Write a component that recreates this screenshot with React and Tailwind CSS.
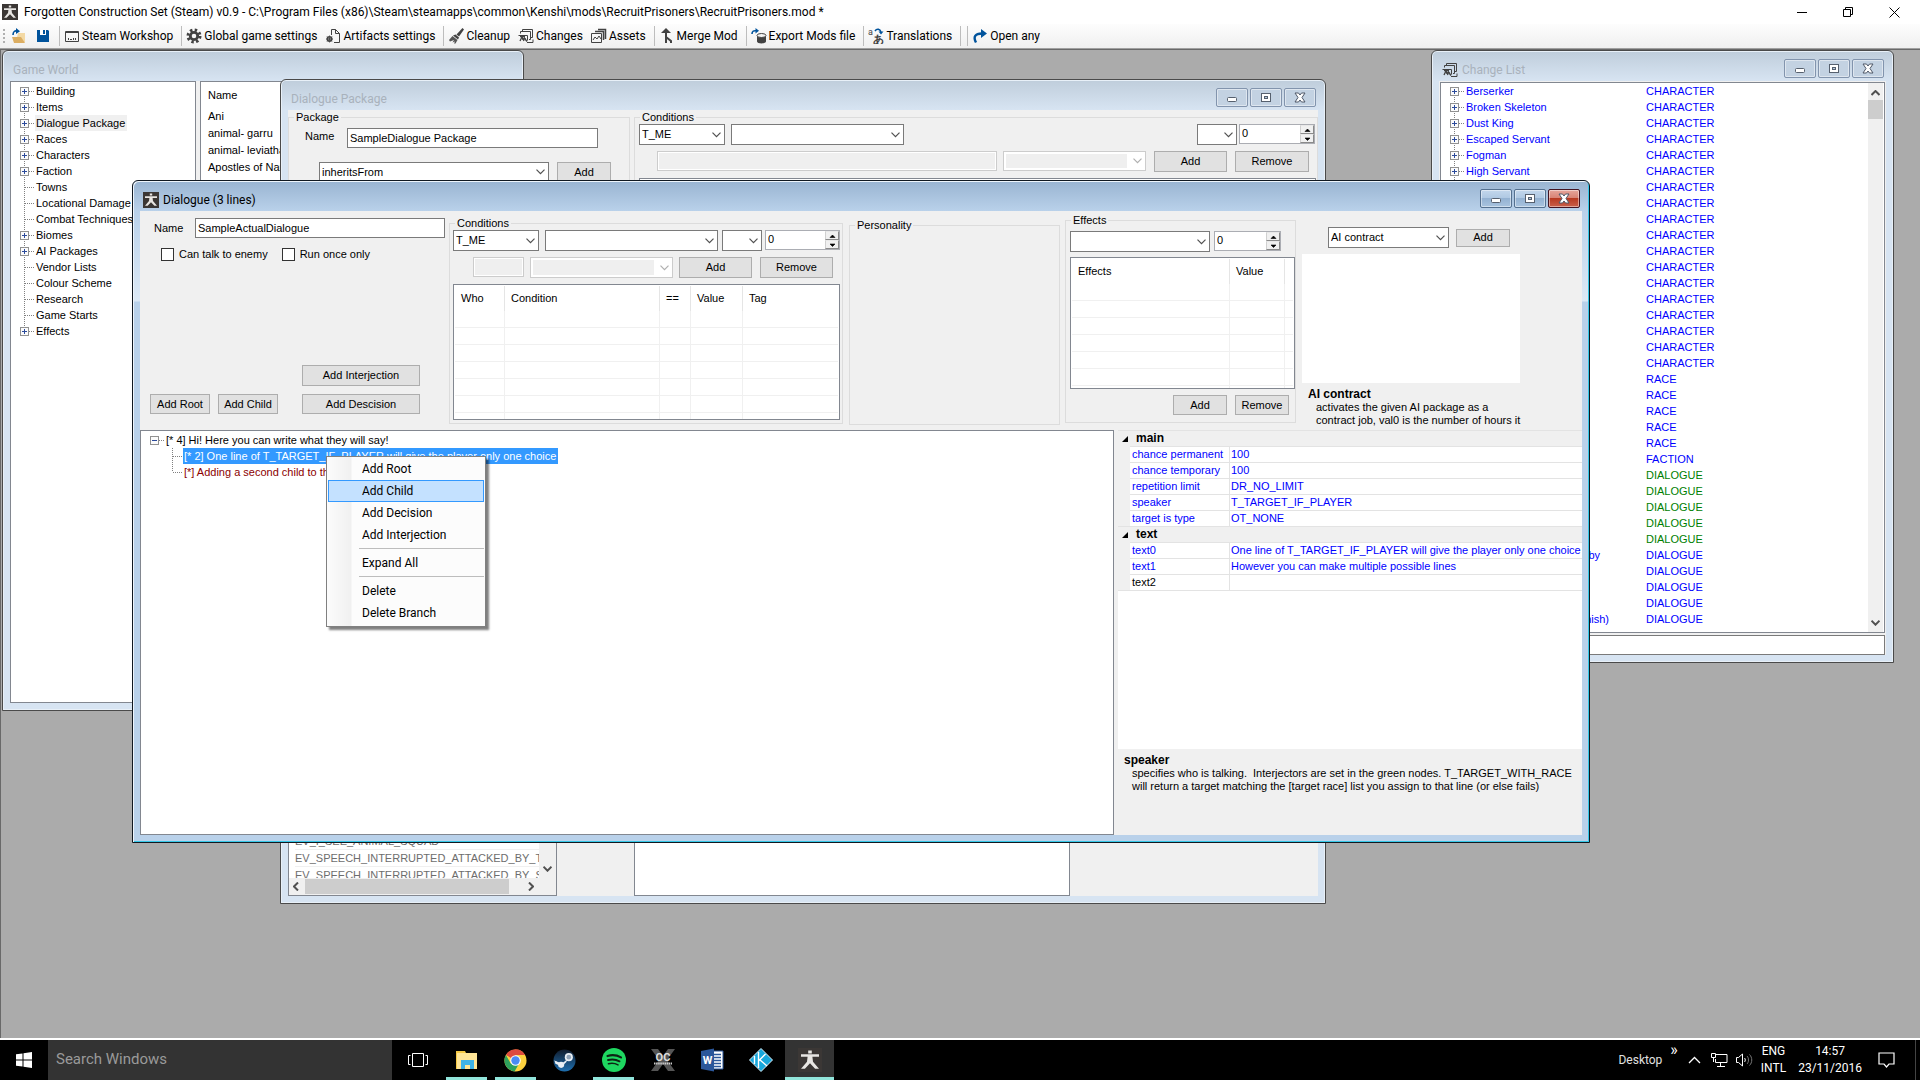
import React, { useState } from 'react';
import clsx from 'clsx';

const GAME_WORLD = [
  ['Building', true],
  ['Items', true],
  ['Dialogue Package', true],
  ['Races', true],
  ['Characters', true],
  ['Faction', true],
  ['Towns', false],
  ['Locational Damage', false],
  ['Combat Techniques', false],
  ['Biomes', true],
  ['AI Packages', true],
  ['Vendor Lists', false],
  ['Colour Scheme', false],
  ['Research', false],
  ['Game Starts', false],
  ['Effects', true],
];

const PACKAGES = ['Ani', 'animal- garru', 'animal- leviathan', 'Apostles of Narko', 'Armour King'];

const CHANGED_NAMES = ['Berserker', 'Broken Skeleton', 'Dust King', 'Escaped Servant', 'Fogman', 'High Servant'];

const CHANGES = [
  ...Array(18).fill('CHARACTER'),
  ...Array(5).fill('RACE'),
  'FACTION',
  ...Array(5).fill('DIALOGUE_NEW'),
  ...Array(5).fill('DIALOGUE'),
].map((type, i) => ({
  name: CHANGED_NAMES[i] || '',
  tail: { 29: 'by', 33: 'nish)' }[i],
  isNew: type === 'DIALOGUE_NEW',
  type: type.replace('_NEW', ''),
}));

const MAIN_PROPS = [
  ['chance permanent', '100'],
  ['chance temporary', '100'],
  ['repetition limit', 'DR_NO_LIMIT'],
  ['speaker', 'T_TARGET_IF_PLAYER'],
  ['target is type', 'OT_NONE'],
];

const TEXT_PROPS = [
  ['text0', 'One line of T_TARGET_IF_PLAYER will give the player only one choice'],
  ['text1', 'However you can make multiple possible lines'],
  ['text2', ''],
];

/* ---------- icons ---------- */

const KenshiIcon = ({ className = 'size-4' }) => (
  <svg viewBox="0 0 16 16" className={className} aria-hidden="true">
    <rect width="16" height="16" fill="#3b3735" />
    <path d="M6.800 1.600h2.400v2H6.800zM2 4.200h12v1.700H9.600l.4 3.200 4 4.700h-2.600L8 10.200l-3.400 3.600H2l4-4.700.4-3.200H2z" fill="#e8e6e3" />
  </svg>
);

const FolderIcon = () => (
  <svg viewBox="0 0 16 16" className="size-4" aria-hidden="true">
    <path d="M7 5h7v9H5z" fill="#f3d9a4" />
    <path d="M1 9h9l4 6H3z" fill="#dcae62" />
    <path d="M2 7C2 3.500 4 2.500 6 3" fill="none" stroke="#00539c" strokeWidth="1.600" />
    <path d="M5 0l4 3.200L5 6z" fill="#00539c" />
  </svg>
);

const SaveIcon = () => (
  <svg viewBox="0 0 16 16" className="size-4" aria-hidden="true">
    <path d="M2 2h11l1 1v11H2z" fill="#00539c" />
    <path d="M5 2h6v5H5z" fill="#fff" />
    <path d="M8 2h2v4H8z" fill="#00539c" />
  </svg>
);

const WorkshopIcon = () => (
  <svg viewBox="0 0 16 16" className="size-4" fill="none" stroke="#424242" aria-hidden="true">
    <path d="M1.500 3.500h13v10h-13z" />
    <path d="M2 3h12v2H2z" fill="#424242" stroke="none" />
    <path d="M4.500 10v2M6 11.500h2M9.500 10v2M11.500 10v2" />
  </svg>
);

const GearIcon = () => (
  <svg viewBox="0 0 16 16" className="size-4" aria-hidden="true">
    <circle cx="8" cy="8" r="6" fill="none" stroke="#424242" strokeWidth="3" strokeDasharray="2.400 2.310" />
    <circle cx="8" cy="8" r="3.700" fill="none" stroke="#424242" strokeWidth="2.800" />
  </svg>
);

const ArtifactIcon = () => (
  <svg viewBox="0 0 16 16" className="size-4" fill="none" stroke="#424242" aria-hidden="true">
    <path d="M6.500 7V1.500h4l4 4v9H9" fill="#f7f7f7" />
    <path d="M10.500 1.500v4h4" />
    <circle cx="4.500" cy="11" r="2.200" strokeWidth="1.600" />
    <path d="M4.500 7.500v7M1 11h7M2 8.500l5 5M7 8.500l-5 5" strokeWidth=".8" />
  </svg>
);

const BroomIcon = () => (
  <svg viewBox="0 0 16 16" className="size-4" aria-hidden="true">
    <path d="M14.500 0l1.500 1.500-5 7-2.500-2z" fill="#424242" />
    <path d="M7.500 6.500l3.500 3-1 2-5-4z" fill="#424242" />
    <path d="M4.500 8l5 4-2 3.500H6l1-2-2.500 1L6 12l-4 1.500L1 12z" fill="#565656" />
  </svg>
);

const ChangesIcon = () => (
  <svg viewBox="0 0 16 16" className="size-4" fill="none" stroke="#424242" aria-hidden="true">
    <path d="M4.500 3V1.500h10v8H13" />
    <path d="M2.500 5.500v-2h10v8H11" />
    <path d="M.5 7.500h9v5M9 14.500h6v-3" />
    <path d="M2 13l2-4 2 4M6 9.500l3 4M2 8.500h5M4 11h4" strokeWidth="1.300" />
  </svg>
);

const AssetsIcon = () => (
  <svg viewBox="0 0 16 16" className="size-4" fill="none" stroke="#424242" aria-hidden="true">
    <path d="M.5 5.500h10v9H.5z" />
    <path d="M2 12l2-3 2 2 2-3 2 3" />
    <path d="M4 3.500h8.500V12M7 1.500h7.500V11" strokeWidth="1.500" />
  </svg>
);

const MergeIcon = () => (
  <svg viewBox="0 0 16 16" className="size-4" fill="none" stroke="#424242" strokeWidth="2" aria-hidden="true">
    <path d="M7 15V3M12 15v-2L7 9" />
    <path d="M7 0l5 5H2z" fill="#424242" stroke="none" />
  </svg>
);

const ExportIcon = () => (
  <svg viewBox="0 0 16 16" className="size-4" aria-hidden="true">
    <path d="M1 6C1 3 3 2.500 5 2.800" fill="none" stroke="#00539c" strokeWidth="1.600" />
    <path d="M4.500 0l3.500 2.800-3.500 2.700z" fill="#00539c" />
    <path d="M6 7.500v6c0 2.500 9 2.500 9 0v-6z" fill="#424242" />
    <ellipse cx="10.500" cy="7.500" rx="4.500" ry="2" fill="#f5f5f5" stroke="#424242" />
  </svg>
);

const TranslateIcon = () => (
  <svg viewBox="0 0 16 16" className="size-4" aria-hidden="true">
    <text x="0" y="7" fontSize="9" fill="#424242">a</text>
    <text x="5" y="15" fontSize="11" fontWeight="bold" fill="#424242">あ</text>
    <path d="M7 3c2-3 5-2 6 1" fill="none" stroke="#00539c" strokeWidth="1.500" />
    <path d="M10.500 3.500h5L13 6.500z" fill="#00539c" />
  </svg>
);

const OpenAnyIcon = () => (
  <svg viewBox="0 0 16 16" className="size-4" aria-hidden="true">
    <path d="M4 14.500C1 9 3 5.500 10 5.500" fill="none" stroke="#00539c" strokeWidth="2.400" />
    <path d="M9 1l6 4.500L9 10z" fill="#00539c" />
  </svg>
);

const Chevron = ({ className }) => (
  <svg viewBox="0 0 9 6" className={clsx('pointer-events-none absolute right-1 top-1/2 h-1.5 w-[9px] -translate-y-1/2', className)} fill="none" stroke="currentColor" strokeWidth="1.200" aria-hidden="true">
    <path d="M.5.7l4 4 4-4" />
  </svg>
);

/* Branch lines and the +/- box of one tree row */
const TreeGlyph = ({ box, first, last }) => (
  <svg width="16" height="16" className="shrink-0" aria-hidden="true" shapeRendering="crispEdges">
    <path d={clsx(!first && 'M5.500 0V8', !last && 'M5.500 8V16', 'M6 8.500H16')} stroke="#808080" strokeDasharray="1 1" fill="none" />
    {box && (
      <>
        <rect x="1.500" y="4.500" width="8" height="8" fill="#fbfbfb" stroke="#919191" />
        <path d={box === '+' ? 'M3 8.500h5M5.500 6v5' : 'M3 8.500h5'} stroke="#2b4a9b" />
      </>
    )}
  </svg>
);

/* ---------- controls ---------- */

const Btn = ({ className, children }) => (
  <button className={clsx('flex items-center justify-center border border-[#adadad] bg-[#e1e1e1] leading-none hover:border-[#0078d7] hover:bg-[#e5f1fb]', className)}>
    {children}
  </button>
);

const Combo = ({ label, value = '', disabled, className }) => (
  <div className={clsx('relative shrink-0', className)}>
    <select
      aria-label={label}
      disabled={disabled}
      className={clsx(
        'block h-full w-full appearance-none border pl-0.5 leading-none outline-none',
        disabled ? 'border-[#ccc] bg-[#efefef] opacity-100 shadow-[inset_0_0_0_2px_white,inset_-18px_0_0_white]' : 'border-[#7a7a7a] bg-white'
      )}
    >
      <option>{value}</option>
    </select>
    <Chevron className={disabled ? 'text-[#b0b0b0]' : 'text-[#505050]'} />
  </div>
);

const Spinner = ({ label, className }) => (
  <div className={clsx('flex shrink-0 border border-[#abadb3] bg-white', className)}>
    <input aria-label={label} defaultValue="0" className="min-w-0 flex-1 pb-0.5 pl-0.5 outline-none" />
    <div className="flex w-3.5 flex-col">
      {['M1 3.500h5L3.500 1z', 'M1 1h5L3.500 3.500z'].map((d, i) => (
        <button key={d} aria-label={i ? 'Down' : 'Up'} className="flex flex-1 items-center justify-center border border-b-[#8a8a8a] border-l-[#d0d0d0] border-r-[#8a8a8a] border-t-[#e8e8e8] bg-[#f0f0f0]">
          <svg viewBox="0 0 7 4" className="h-1 w-[7px] shrink-0"><path d={d} stroke="#000" strokeWidth=".6" /></svg>
        </button>
      ))}
    </div>
  </div>
);

const Group = ({ title, className, children }) => (
  <fieldset className={clsx('shrink-0 border border-[#dcdcdc]', className)}>
    <legend className="ml-[5px] px-0.5 leading-[14px]">{title}</legend>
    {children}
  </fieldset>
);

const ListView = ({ columns, rows, label, className }) => (
  <div className={clsx('shrink-0 overflow-hidden border border-[#828790] bg-white p-px', className)}>
    <table aria-label={label} className="w-full table-fixed border-separate border-spacing-0">
      <thead>
        <tr>
          {columns.map(([name, width], i) => (
            <th key={i} className={clsx('h-[25px] pl-1.5 text-left font-normal', width, i < columns.length - 1 && 'border-r border-[#e5e5e5]')}>{name}</th>
          ))}
        </tr>
      </thead>
      <tbody>
        {Array.from({ length: rows }, (_, r) => (
          <tr key={r}>
            {columns.map((c, i) => (
              <td key={i} className={clsx('h-[17px] border-b border-[#f0f0f0]', i < columns.length - 1 && 'border-r')} />
            ))}
          </tr>
        ))}
      </tbody>
    </table>
  </div>
);

const WindowButtons = ({ active }) => {
  const base = 'flex h-[19px] w-8 items-center justify-center rounded-[2px] border shadow-[inset_0_0_0_1px_rgba(255,255,255,0.45)]';
  const plain = active
    ? 'border-[#54708f] bg-[linear-gradient(#c3d7ec_0%,#b0c9e3_45%,#94b2d2_50%,#a9c4df_100%)]'
    : 'border-[#8294ad] bg-[#c3d2e2]';
  return (
    <div className="mr-0.5 flex gap-0.5">
      <button aria-label="Minimize" className={clsx(base, plain)}>
        <svg width="12" height="11"><rect x="1.500" y="5.500" width="9" height="4" rx="1" fill="#fff" stroke="#56606e" /></svg>
      </button>
      <button aria-label="Maximize" className={clsx(base, plain)}>
        <svg width="12" height="11"><rect x="1.500" y="1.500" width="9" height="8" fill="#fff" stroke="#56606e" /><rect x="4.500" y="4.500" width="3" height="2" fill="#b5c9de" stroke="#56606e" /></svg>
      </button>
      <button aria-label="Close" className={clsx(base, active ? 'border-[#431422] bg-[linear-gradient(#e6a69b_0%,#d98476_45%,#b83a22_50%,#c9604a_100%)]' : plain)}>
        <svg width="12" height="11"><path d="M1 1h3.500L6 3l1.500-2H11L8 5.500 11 10H7.500L6 8l-1.500 2H1l3-4.500z" fill="#fff" stroke="#4f5868" /></svg>
      </button>
    </div>
  );
};

const MdiWindow = ({ title, icon, active, buttons = true, className, children }) => (
  <section
    aria-label={title}
    className={clsx(
      'absolute flex flex-col rounded-t-md border px-[7px] pb-[7px]',
      active
        ? 'border-[#101820] bg-[linear-gradient(180deg,#99b4d1_0px,#b9d1ea_30px,#dce9f6_120px,#b9d1ea_121px)] shadow-[inset_1px_1px_0_#eef5fc,inset_-1px_-1px_0_#35c8e8]'
        : 'border-[#4a4a4a] bg-[linear-gradient(180deg,#bfcddb_0px,#d7e4f2_30px)] shadow-[inset_0_0_0_1px_#e8f0f8]',
      className
    )}
  >
    <header className="flex h-[30px] shrink-0 items-start justify-between pt-2">
      <h2 className={clsx('flex items-center gap-1 pl-[3px] pt-px font-[Roboto,sans-serif] text-xs leading-5', active ? 'text-black' : 'text-[#a9b2bc]')}>
        {icon}
        {title}
      </h2>
      {buttons && <WindowButtons active={active} />}
    </header>
    <div className="flex min-h-0 flex-1 bg-[#f0f0f0]">{children}</div>
  </section>
);

/* ---------- windows ---------- */

const GameWorld = () => (
  <MdiWindow title="Game World" buttons={false} className="left-0.5 top-0 h-[661px] w-[522px]">
    <div className="flex min-w-0 flex-1 gap-1">
      <ul className="w-[186px] shrink-0 border border-[#828790] bg-white pl-2 pt-px">
        {GAME_WORLD.map(([name, children], i) => (
          <li key={name} className="flex h-4 items-center whitespace-nowrap">
            <TreeGlyph box={children && '+'} first={i === 0} last={i === GAME_WORLD.length - 1} />
            <span className={clsx('pl-px pr-0.5 leading-4', name === 'Dialogue Package' && 'bg-[#f0f0f0]')}>{name}</span>
          </li>
        ))}
      </ul>
      <div className="flex-1 border border-[#828790] bg-white">
        <table className="border-separate border-spacing-0">
          <thead>
            <tr><th className="h-[26px] py-0 pl-[7px] text-left font-normal">Name</th></tr>
          </thead>
          <tbody>
            {PACKAGES.map((name) => (
              <tr key={name}><td className="h-[17px] py-0 pl-[7px] leading-[17px]">{name}</td></tr>
            ))}
          </tbody>
        </table>
      </div>
    </div>
  </MdiWindow>
);

const DialoguePackage = () => (
  <MdiWindow title="Dialogue Package" className="left-[280px] top-[29px] h-[825px] w-[1046px]">
    <div className="flex min-w-0 flex-1 flex-col justify-between">
      <div className="flex justify-between">
        <Group title="Package" className="h-[140px] w-[342px]">
          <div className="ml-4 mt-1 flex items-start">
            <label htmlFor="package-name" className="w-[42px] leading-4">Name</label>
            <input id="package-name" defaultValue="SampleDialogue Package" className="h-5 w-[251px] border border-[#7a7a7a] bg-white px-0.5" />
          </div>
          <div className="ml-[30px] mt-3.5 flex gap-2">
            <Combo label="Inherits" value="inheritsFrom" className="h-5 w-[230px]" />
            <Btn className="h-[21px] w-[54px]">Add</Btn>
          </div>
        </Group>
        <Group title="Conditions" className="h-[140px] w-[684px]">
          <div className="mr-0.5 flex pl-1">
            <Combo label="Who" value="T_ME" className="h-[21px] w-[86px]" />
            <Combo label="Condition" className="ml-1.5 h-[21px] w-[173px]" />
            <Combo label="Operator" className="ml-auto h-[21px] w-10" />
            <Spinner label="Value" className="ml-0.5 h-5 w-[76px]" />
          </div>
          <div className="mr-2 mt-1.5 flex justify-end">
            <input aria-label="Tag text" disabled className="h-5 w-[340px] border border-[#ccc] bg-[#efefef] shadow-[inset_0_0_0_1px_white]" />
            <Combo label="Tag" disabled className="ml-1.5 h-5 w-[143px]" />
            <Btn className="ml-2 h-[21px] w-[73px]">Add</Btn>
            <Btn className="ml-2 h-[21px] w-[74px]">Remove</Btn>
          </div>
          <div className="ml-1 mr-px mt-1.5 h-20 border border-[#828790] bg-white" />
        </Group>
      </div>
      <div className="flex">
        <div className="flex h-16 w-[269px] flex-col justify-end border border-[#828790] bg-white text-[#6d6d6d]">
          <div className="flex min-h-0 flex-1 items-end">
            <ul className="h-full flex-1 overflow-hidden whitespace-nowrap pl-1.5">
              <li className="h-[17px] border-b border-[#f0f0f0] leading-4">EV_I_SEE_ANIMAL_SQUAD</li>
              <li className="h-[17px] border-b border-[#f0f0f0] leading-4">EV_SPEECH_INTERRUPTED_ATTACKED_BY_T</li>
              <li className="h-[17px] leading-4">EV_SPEECH_INTERRUPTED_ATTACKED_BY_S</li>
            </ul>
            <div className="flex h-full w-[17px] items-end justify-center bg-[#f0f0f0] pb-1.5">
              <svg viewBox="0 0 9 6" className="h-1.5 w-[9px]" fill="none" stroke="#505050" strokeWidth="2"><path d="M.5.7l4 4 4-4" /></svg>
            </div>
          </div>
          <div className="flex h-[17px] items-center bg-[#f0f0f0] pl-1 pr-[22px]">
            <svg viewBox="0 0 6 9" className="h-[9px] w-1.5" fill="none" stroke="#505050" strokeWidth="2"><path d="M5 .5l-4 4 4 4" /></svg>
            <div className="ml-1.5 h-[15px] w-[204px] bg-[#cdcdcd]" />
            <svg viewBox="0 0 6 9" className="ml-auto h-[9px] w-1.5" fill="none" stroke="#505050" strokeWidth="2"><path d="M1 .5l4 4-4 4" /></svg>
          </div>
        </div>
        <div className="ml-[77px] w-[436px] border border-[#828790] bg-white" />
      </div>
    </div>
  </MdiWindow>
);

const ChangeList = () => (
  <MdiWindow
    title="Change List"
    icon={<ChangesIcon />}
    className="right-[26px] top-0 h-[613px] w-[463px]"
  >
    <div className="flex min-w-0 flex-1 flex-col gap-0.5 px-px pt-px">
      <div className="flex min-h-0 flex-1 border border-[#828790] bg-white pr-px text-[#0000ff]">
        <ul className="min-w-0 flex-1 pl-2">
          {CHANGES.map((c, i) => (
            <li key={i} className={clsx('flex h-4 items-center', c.isNew && 'text-[#008000]')}>
              <TreeGlyph box="+" first={i === 0} />
              <span className="w-[181px] shrink-0 pl-px">
                {c.tail ? <span className={clsx('block text-right', i === 29 ? 'w-[134px]' : 'w-[143px]')}>{c.tail}</span> : c.name}
              </span>
              <span>{c.type}</span>
            </li>
          ))}
        </ul>
        <div className="flex w-[15px] flex-col items-center justify-between bg-[#f0f0f0] pb-1.5 pt-[7px]">
          <div className="flex w-full flex-col items-center gap-1">
            <svg viewBox="0 0 9 6" className="h-1.5 w-[9px]" fill="none" stroke="#505050" strokeWidth="2"><path d="M.5 5l4-4 4 4" /></svg>
            <div className="h-[19px] w-full bg-[#cdcdcd]" />
          </div>
          <svg viewBox="0 0 9 6" className="h-1.5 w-[9px]" fill="none" stroke="#505050" strokeWidth="2"><path d="M.5.7l4 4 4-4" /></svg>
        </div>
      </div>
      <input aria-label="Filter" className="h-5 w-full border border-[#7a7a7a] bg-white px-1" />
    </div>
  </MdiWindow>
);

const PropertyCategory = ({ name, rows }) => (
  <tbody>
    <tr>
      <th colSpan={3} className="h-4 border-t border-[#e3e3e3] bg-[#f0f0f0] p-0 text-left">
        <div className="flex items-center gap-2 pl-1">
          <svg viewBox="0 0 6 6" className="size-1.5" aria-hidden="true"><path d="M6 0v6H0z" /></svg>
          <span className="text-xs leading-[15px]">{name}</span>
        </div>
      </th>
    </tr>
    {rows.map(([key, value]) => (
      <tr key={key} className={clsx('leading-[15px]', value ? 'text-[#0000ff]' : 'text-black')}>
        <td className="h-4 w-3 bg-[#f0f0f0] p-0" />
        <td className="h-4 w-[100px] border-r border-t border-[#e3e3e3] py-0 pl-0.5">{key}</td>
        <td className="h-4 border-t border-[#e3e3e3] py-0 pl-px">{value}</td>
      </tr>
    ))}
  </tbody>
);

const ContextMenu = () => {
  const [hovered, setHovered] = useState('Add Child');
  const groups = [['Add Root', 'Add Child', 'Add Decision', 'Add Interjection'], ['Expand All'], ['Delete', 'Delete Branch']];
  return (
    <div role="menu" className="absolute left-[185px] top-[25px] w-40 border border-[#808080] bg-[linear-gradient(90deg,#fcfcfc_0px,#f0f0f0_24px,#fcfcfc_25px)] p-px pb-0.5 font-[Roboto,sans-serif] text-xs text-black shadow-[3px_3px_2px_rgba(0,0,0,0.5)]">
      {groups.map((items, g) => (
        <div key={g} role="group">
          {g > 0 && <hr className="mb-[3px] ml-[31px] mt-0.5 border-[#bdbdbd]" />}
          {items.map((item) => (
            <button
              key={item}
              role="menuitem"
              onMouseEnter={() => setHovered(item)}
              className={clsx(
                'block h-[22px] w-full border pl-[33px] text-left leading-5',
                hovered === item ? 'border-[#3399ff] bg-[#c4e1ff]' : 'border-transparent'
              )}
            >
              {item}
            </button>
          ))}
        </div>
      ))}
    </div>
  );
};

const DialogueWindow = () => (
  <MdiWindow active title="Dialogue (3 lines)" icon={<KenshiIcon />} className="left-[132px] top-[130px] h-[663px] w-[1458px]">
    <div className="flex min-w-0 flex-1 flex-col">
      <div className="flex h-[219px] shrink-0 items-start">
        <div className="flex h-full w-[305px] shrink-0 flex-col pb-4 pt-[7px]">
          <div className="flex items-center pl-3.5">
            <label htmlFor="dialogue-name" className="w-[41px]">Name</label>
            <input id="dialogue-name" defaultValue="SampleActualDialogue" className="h-5 w-[250px] border border-[#7a7a7a] bg-white px-0.5" />
          </div>
          <div className="flex gap-3.5 pl-[21px] pt-2">
            {['Can talk to enemy', 'Run once only'].map((text) => (
              <label key={text} className="flex items-center gap-[5px] leading-4">
                <input type="checkbox" className="size-[13px] appearance-none border border-[#333] bg-white checked:bg-[#333]" />
                {text}
              </label>
            ))}
          </div>
          <div className="mt-auto flex items-end pl-2.5">
            <Btn className="h-5 w-[60px]">Add Root</Btn>
            <Btn className="ml-2 h-5 w-[60px]">Add Child</Btn>
            <div className="ml-6 flex flex-col gap-2">
              <Btn className="h-[21px] w-[118px]">Add Interjection</Btn>
              <Btn className="h-5 w-[118px]">Add Descision</Btn>
            </div>
          </div>
        </div>

        <Group title="Conditions" className="ml-1 mt-[5px] h-[208px] w-[394px]">
          <div className="flex pl-[3px]">
            <Combo label="Who" value="T_ME" className="h-[21px] w-[86px]" />
            <Combo label="Condition" className="ml-1.5 h-[21px] w-[173px]" />
            <Combo label="Operator" className="ml-1 h-[21px] w-10" />
            <Spinner label="Value" className="ml-[3px] h-5 w-[75px]" />
          </div>
          <div className="mt-1.5 flex pl-[23px]">
            <input aria-label="Tag text" disabled className="h-5 w-[51px] border border-[#ccc] bg-[#efefef] shadow-[inset_0_0_0_1px_white]" />
            <Combo label="Tag" disabled className="ml-1.5 h-[21px] w-[143px]" />
            <Btn className="ml-1.5 h-[21px] w-[73px]">Add</Btn>
            <Btn className="ml-2 h-[21px] w-[73px]">Remove</Btn>
          </div>
          <ListView
            label="Conditions"
            rows={7}
            columns={[['Who', 'w-[50px]'], ['Condition', 'w-[155px]'], ['==', 'w-[31px]'], ['Value', 'w-[52px]'], ['Tag', '']]}
            className="ml-[3px] mt-1.5 h-[136px] w-[387px]"
          />
        </Group>

        <Group title="Personality" className="ml-1.5 mt-[7px] h-[207px] w-[211px]" />

        <Group title="Effects" className="ml-[5px] mt-0.5 h-[210px] w-[231px]">
          <div className="mt-1 flex pl-1">
            <Combo label="Effect" className="h-[21px] w-[140px]" />
            <Spinner label="Effect value" className="ml-1 h-5 w-[67px]" />
          </div>
          <ListView label="Effects" rows={7} columns={[['Effects', 'w-[158px]'], ['Value', 'w-[55px]'], ['', '']]} className="ml-1 mt-[5px] h-[132px] w-[225px]" />
          <div className="mr-1.5 mt-1.5 flex justify-end gap-2">
            <Btn className="h-5 w-[54px]">Add</Btn>
            <Btn className="h-5 w-[54px]">Remove</Btn>
          </div>
        </Group>

        <div className="ml-1.5 flex-1 pt-4">
          <div className="flex items-center gap-[7px] pl-[26px]">
            <Combo label="AI" value="AI contract" className="h-[21px] w-[121px]" />
            <Btn className="h-[18px] w-[54px]">Add</Btn>
          </div>
          <div className="mt-1.5 h-[129px] w-[218px] bg-white" />
          <div className="w-[225px] pl-1.5 pt-1 leading-[13px]">
            <h3 className="text-xs font-bold leading-[14px]">AI contract</h3>
            <p className="pl-2">activates the given AI package as a contract job, val0 is the number of hours it</p>
          </div>
        </div>
      </div>

      <div className="flex min-h-0 flex-1 gap-1">
        <div className="relative min-w-0 flex-1 border border-[#828790] bg-white pl-2 pt-px">
          <ul className="whitespace-nowrap leading-4">
            <li>
              <div className="flex h-4">
                <TreeGlyph box="-" first last />
                <span className="pl-px">[* 4] Hi! Here you can write what they will say!</span>
              </div>
              <ul className="pl-[18px]">
                <li className="flex h-4">
                  <TreeGlyph />
                  <span className="bg-[#3399ff] pl-px pr-0.5 text-white">[* 2] One line of T_TARGET_IF_PLAYER will give the player only one choice</span>
                </li>
                <li className="flex h-4 text-[#8b0000]">
                  <TreeGlyph last />
                  <span className="pl-px">[*] Adding a second child to the same line</span>
                </li>
              </ul>
            </li>
          </ul>
          <ContextMenu />
        </div>
        <div className="flex w-[464px] shrink-0 flex-col">
          <div className="flex-1 bg-white">
            <table className="w-full table-fixed border-separate border-spacing-0 border-b border-[#e3e3e3]">
              <colgroup>
                <col className="w-3" />
                <col className="w-[100px]" />
                <col />
              </colgroup>
              <PropertyCategory name="main" rows={MAIN_PROPS} />
              <PropertyCategory name="text" rows={TEXT_PROPS} />
            </table>
          </div>
          <div className="h-[86px] pl-1.5 pt-1 leading-[13px]">
            <h3 className="text-xs font-bold leading-[14px]">speaker</h3>
            <p className="whitespace-pre-line pl-2">
              specifies who is talking.&nbsp; Interjectors are set in the green nodes. T_TARGET_WITH_RACE{'\n'}will return a target matching the [target race] list you assign to that line (or else fails)
            </p>
          </div>
        </div>
      </div>
    </div>
  </MdiWindow>
);

/* ---------- main window and taskbar ---------- */

const ToolItem = ({ icon, children, className }) => (
  <button className={clsx('flex items-center gap-0.5 whitespace-nowrap hover:bg-[#c4e1ff]', className)}>
    {icon}
    {children}
  </button>
);

const Sep = ({ className }) => <div className={clsx('h-5 w-px bg-[#bdbdbd]', className)} />;

const Toolbar = () => (
  <nav className="flex h-6 items-center bg-gradient-to-b from-[#fdfdfd] to-[#f0f0f0] pl-[3px]">
    <div className="mr-1.5 h-3.5 w-0.5 bg-[repeating-linear-gradient(#b0b0b0_0px,#b0b0b0_2px,transparent_2px,transparent_4px)]" />
    <button aria-label="Open"><FolderIcon /></button>
    <button aria-label="Save" className="ml-2"><SaveIcon /></button>
    <Sep className="ml-2 mr-1" />
    <ToolItem icon={<WorkshopIcon />}>Steam Workshop</ToolItem>
    <Sep className="ml-2 mr-1" />
    <ToolItem icon={<GearIcon />}>Global game settings</ToolItem>
    <ToolItem icon={<ArtifactIcon />} className="ml-2">Artifacts settings</ToolItem>
    <Sep className="ml-2 mr-1" />
    <ToolItem icon={<BroomIcon />}>Cleanup</ToolItem>
    <ToolItem icon={<ChangesIcon />} className="ml-2">Changes</ToolItem>
    <ToolItem icon={<AssetsIcon />} className="ml-2">Assets</ToolItem>
    <Sep className="ml-2 mr-1" />
    <ToolItem icon={<MergeIcon />}>Merge Mod</ToolItem>
    <Sep className="ml-2 mr-1" />
    <ToolItem icon={<ExportIcon />}>Export Mods file</ToolItem>
    <Sep className="ml-2 mr-1" />
    <ToolItem icon={<TranslateIcon />}>Translations</ToolItem>
    <Sep className="ml-2 mr-1.5" />
    <Sep className="mr-1" />
    <ToolItem icon={<OpenAnyIcon />}>Open any</ToolItem>
  </nav>
);

const TaskButton = ({ label, running, active, children }) => (
  <button aria-label={label} className={clsx('relative flex w-[49px] items-center justify-center', active && 'bg-[#333]')}>
    {children}
    {running && <span className={clsx('absolute bottom-0 h-[3px] bg-[#91e5db]', active ? 'inset-x-0' : 'inset-x-1')} />}
  </button>
);

const Taskbar = () => (
  <footer className="flex h-10 shrink-0 bg-black font-[Roboto,sans-serif] text-xs text-white">
    <button aria-label="Start" className="flex w-12 items-center justify-center">
      <svg viewBox="0 0 16 16" className="size-4" fill="#fff"><path d="M0 2.300L6.500 1.400v6.100H0zM7.500 1.200L16 0v7.500H7.500zM0 8.500h6.500v6.100L0 13.700zM7.500 8.500H16V16l-8.500-1.200z" /></svg>
    </button>
    <input aria-label="Search Windows" placeholder="Search Windows" className="mr-px w-[344px] bg-[#333] px-2 text-[15px] outline-none placeholder:text-[#9a9a9a]" />
    <TaskButton label="Task View">
      <svg width="20" height="14" fill="none" stroke="#fff" className="shrink-0"><path d="M4.500.5h11v13h-11zM2.500 2.500h-2v9h2M17.500 2.500h2v9h-2" /></svg>
    </TaskButton>
    <TaskButton label="File Explorer" running>
      <svg width="22" height="20"><path d="M0 1h9l1 2h11v16H0z" fill="#f5c944" /><path d="M1 3h20v16H1z" fill="#ffe596" /><path d="M5 10h13v9h-4v-4H9v4H5z" fill="#3eb3e8" /></svg>
    </TaskButton>
    <TaskButton label="Chrome" running>
      <svg viewBox="0 0 24 24" className="size-[23px]"><circle cx="12" cy="12" r="11.500" fill="#fdd23e" /><path d="M12 12L2 6.200A11.500 11.500 0 0 1 22 6.200H12z" fill="#dd4b3e" /><path d="M2 6.200A11.500 11.500 0 0 0 11 23.400l5.200-9L12 12 7 15z" fill="#2da05c" /><circle cx="12" cy="12" r="5.500" fill="#fff" /><circle cx="12" cy="12" r="4.400" fill="#4a8af4" /></svg>
    </TaskButton>
    <TaskButton label="Steam">
      <svg viewBox="0 0 24 24" className="size-[23px]"><defs><linearGradient id="steam" x1="0" y1="0" x2="0" y2="1"><stop offset="0" stopColor="#111d2e" /><stop offset="1" stopColor="#1e6fb0" /></linearGradient></defs><circle cx="12" cy="12" r="11.500" fill="url(#steam)" /><path d="M1 12l8 3.500 5-4 2-5-2 7-4 4" fill="#e8eef4" /><circle cx="16.500" cy="8.500" r="4.200" fill="#e8eef4" /><circle cx="16.500" cy="8.500" r="2.400" fill="#8fa3b8" /><circle cx="8.500" cy="16.500" r="3.200" fill="#e8eef4" /><path d="M1.500 12l7 3v3l-6-2.500z" fill="#e8eef4" /></svg>
    </TaskButton>
    <TaskButton label="Spotify" running>
      <svg viewBox="0 0 24 24" className="size-6" fill="none" stroke="#0d2414" strokeLinecap="round"><circle cx="12" cy="12" r="12" fill="#1ed760" stroke="none" /><path d="M5.500 8c4.500-1.300 9.500-.8 13.500 1.400" strokeWidth="2.200" /><path d="M6 12c4-1 8-.6 11.500 1.300" strokeWidth="1.900" /><path d="M6.500 15.700c3.500-.8 6.500-.5 9.500 1.200" strokeWidth="1.600" /></svg>
    </TaskButton>
    <TaskButton label="Precision X">
      <svg viewBox="0 0 24 24" className="size-6"><path d="M0 1h7l5 7 5-7h7l-8 11 8 11h-7l-5-7-5 7H0l8-11z" fill="#555" /><text x="12" y="13" textAnchor="middle" fontSize="11" fontWeight="bold" fill="#ddd">OC</text><path d="M3 15.500h18" stroke="#ccc" strokeWidth="2" strokeDasharray="1.500 .6" /></svg>
    </TaskButton>
    <TaskButton label="Word">
      <svg viewBox="0 0 24 24" className="size-6"><path d="M12 3h11v18H12z" fill="#fff" stroke="#2b579a" /><path d="M14 6.500h7M14 9.500h7M14 12.500h7M14 15.500h7M14 18.500h7" stroke="#2b579a" strokeWidth="1.500" /><path d="M1 3l13-2.500v23L1 21z" fill="#2b579a" /><text x="7.500" y="16" textAnchor="middle" fontSize="11" fontWeight="bold" fill="#fff">W</text></svg>
    </TaskButton>
    <TaskButton label="Kodi">
      <svg viewBox="0 0 24 24" className="size-6"><path d="M12 .5L23.500 12 12 23.500.5 12z" fill="#17a7dc" stroke="#d8eef8" /><path d="M9.500 4v16M9.500 13l7-7M10.500 11.500l7.500 6.500M5.500 8v8" fill="none" stroke="#fff" strokeWidth="1.400" /></svg>
    </TaskButton>
    <TaskButton label="Forgotten Construction Set" running active>
      <KenshiIcon className="size-6" />
    </TaskButton>

    <div className="ml-auto flex items-center">
      <span className="text-[#e0e0e0]">Desktop</span>
      <span className="mb-5 ml-2 text-base leading-none">»</span>
      <button aria-label="Show hidden icons" className="ml-2.5">
        <svg width="13" height="8" fill="none" stroke="#fff" strokeWidth="1.300"><path d="M1 7l5.500-5.500L12 7" /></svg>
      </button>
      <svg width="17" height="14" className="ml-2.5" fill="none" stroke="#fff" aria-hidden="true"><path d="M5 1.500h11v8H4.500V6M9.500 10v3M6 13.500h8M.5.500h4v4h-4zM2.500 5v4" /></svg>
      <svg width="17" height="14" className="ml-2" fill="none" stroke="#fff" aria-hidden="true"><path d="M.5 4.500h2L6.500 1v12L2.500 9.500h-2zM8.500 5c1 1 1 3 0 4" /><path d="M11 3c2 2 2 6 0 8M13.500 1.500c3 3 3 8 0 11" stroke="#777" /></svg>
      <div className="ml-2 text-center leading-[17px]">ENG<br />INTL</div>
      <time className="ml-3 text-center leading-[17px]">14:57<br />23/11/2016</time>
      <button aria-label="Action Center" className="ml-4 mr-5">
        <svg width="17" height="16" fill="none" stroke="#fff" strokeWidth="1.200"><path d="M1 1h15v11h-5l-2.500 3L6 12H1z" /></svg>
      </button>
      <div className="mr-1 h-10 w-px bg-[#444]" />
    </div>
  </footer>
);

const App = () => (
  <div className='flex h-screen flex-col overflow-hidden bg-white font-["Liberation_Sans",Arial,sans-serif] text-[11px] text-black'>
    <div className="shrink-0 font-[Roboto,sans-serif] text-xs">
      <header className="flex h-6 items-center justify-between pl-0.5">
        <h1 className="flex items-center gap-1.5">
          <KenshiIcon />
          Forgotten Construction Set (Steam) v0.9 - C:\Program Files (x86)\Steam\steamapps\common\Kenshi\mods\RecruitPrisoners\RecruitPrisoners.mod *
        </h1>
        <div className="mr-5 flex items-center gap-9">
          <button aria-label="Minimize"><svg width="10" height="10" stroke="#000"><path d="M0 5.500h10" /></svg></button>
          <button aria-label="Restore"><svg width="10" height="10" fill="none" stroke="#000"><path d="M.5 2.500h7v7h-7zM2.500 2V.500h7v7H8" /></svg></button>
          <button aria-label="Close"><svg width="11" height="11" stroke="#000"><path d="M.5.5l10 10M10.500.5l-10 10" /></svg></button>
        </div>
      </header>
      <Toolbar />
      <div className="h-0.5 border-t border-[#a0a0a0] bg-[#696969]" />
    </div>
    <main className="relative min-h-0 flex-1 overflow-hidden bg-[#ababab] shadow-[inset_1px_0_0_#696969]">
      <GameWorld />
      <ChangeList />
      <DialoguePackage />
      <DialogueWindow />
    </main>
    <div className="h-0.5 shrink-0 bg-white" />
    <Taskbar />
  </div>
);

export default App;
